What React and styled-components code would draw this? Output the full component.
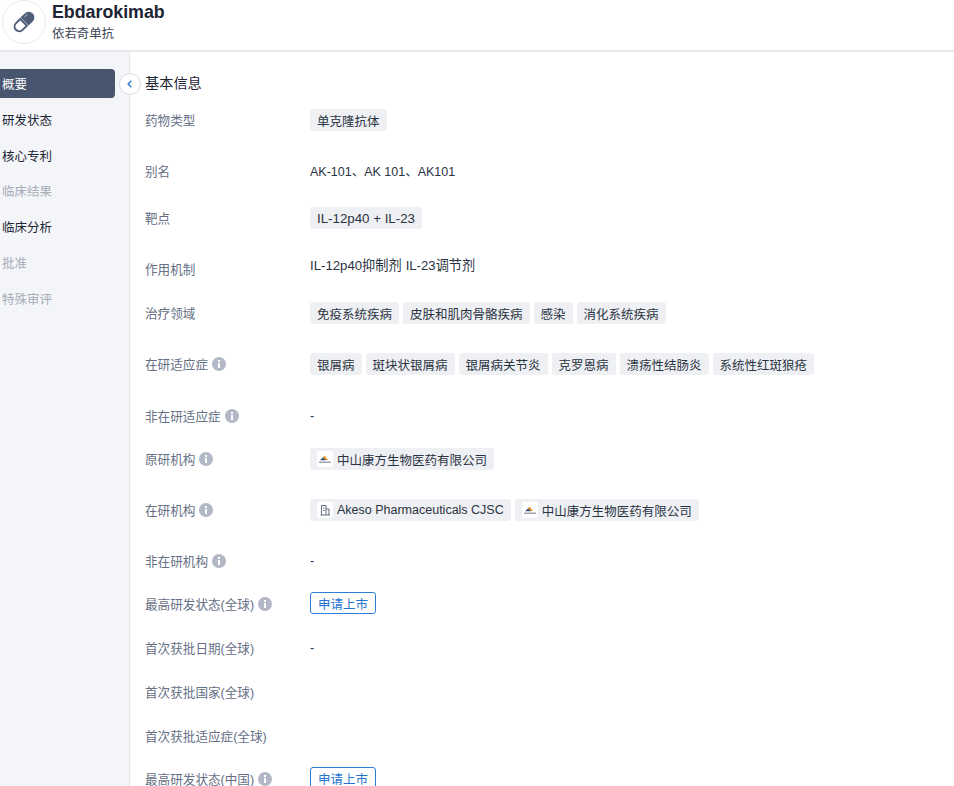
import React from 'react';
import styled, { createGlobalStyle } from 'styled-components';

const Global = createGlobalStyle`
  html, body { margin: 0; padding: 0; background: #fff; }
  body { font-family: "Liberation Sans", "Noto Sans CJK SC", sans-serif; }
`;

const Page = styled.div`
  width: 954px;
  height: 786px;
  overflow: hidden;
  display: flex;
  flex-direction: column;
  background: #fff;
`;

const Header = styled.header`
  height: 50px;
  flex: none;
  display: flex;
  align-items: center;
  gap: 6px;
  padding-left: 2px;
  border-bottom: 2px solid #e6e8eb;
  box-sizing: content-box;
`;

const Avatar = styled.div`
  width: 42px;
  height: 42px;
  margin-top: -6px;
  border: 1px solid #e8eaee;
  border-radius: 50%;
  display: flex;
  align-items: center;
  justify-content: center;
  background: #fff;
`;

const Titles = styled.div`
  display: flex;
  flex-direction: column;
  margin-top: -6px;
`;

const Title = styled.div`
  font-size: 17.8px;
  line-height: 24px;
  font-weight: 700;
  color: #1d2433;
`;

const Subtitle = styled.div`
  font-size: 12.4px;
  line-height: 20px;
  color: #3d4656;
`;

const Body = styled.div`
  flex: 1;
  display: flex;
  min-height: 0;
`;

const Sidebar = styled.nav`
  position: relative;
  width: 130px;
  flex: none;
  padding: 17px 14px 0 0;
  box-sizing: border-box;
  background: #f3f5f8;
  border-right: 1px solid #e6e8eb;
  display: flex;
  flex-direction: column;
  gap: 6.8px;
`;

const NavItem = styled.div`
  height: 29px;
  display: flex;
  align-items: center;
  padding-left: 2px;
  font-size: 12.5px;
  border-radius: ${p => (p.$active ? '0 4px 4px 0' : '0')};
  background: ${p => (p.$active ? '#48556f' : 'transparent')};
  color: ${p => (p.$active ? '#fff' : p.$muted ? '#a6adb9' : '#1d2433')};
`;

const Collapse = styled.button`
  position: absolute;
  top: 21px;
  right: -12px;
  width: 22px;
  height: 22px;
  padding: 0;
  border: 1px solid #d9dde3;
  border-radius: 50%;
  background: #fff;
  display: flex;
  align-items: center;
  justify-content: center;
`;

const Main = styled.main`
  flex: 1;
  padding: 20px 0 0 15px;
  min-width: 0;
`;

const SectionTitle = styled.h2`
  margin: 0 0 13px;
  font-size: 14.2px;
  line-height: 22px;
  font-weight: 400;
  color: #1d2433;
`;

const Row = styled.div`
  display: flex;
  align-items: center;
  height: 24px;
  margin-bottom: ${p => p.$gap}px;
`;

const Label = styled.div`
  width: 165px;
  flex: none;
  display: flex;
  align-items: center;
  gap: 4px;
  font-size: 12.6px;
  color: #667085;
  transform: translateY(${p => p.$shift || 0}px);
`;

const Value = styled.div`
  display: flex;
  align-items: center;
  gap: 4px;
  font-size: 12.5px;
  color: #2a3342;
`;

const Mechanism = styled.span`
  font-size: 13.2px;
  transform: translateY(-1px);
`;

const Dash = styled.span`
  transform: translateY(1px);
`;

const Tag = styled.span`
  display: inline-flex;
  align-items: center;
  gap: 4px;
  height: 22px;
  margin-top: 2px;
  padding: 0 7px;
  border-radius: 3px;
  background: #eef0f3;
  font-size: ${p => (p.$wide ? '13.3px' : '12.5px')};
  color: #2a3342;
  white-space: nowrap;
`;

const Status = styled.span`
  display: inline-flex;
  align-items: center;
  justify-content: center;
  width: 66px;
  height: 22px;
  box-sizing: border-box;
  border: 1px solid #2d7fd9;
  border-radius: 3px;
  color: #2474cf;
  font-size: 12.5px;
`;

const IconBox = styled.span`
  width: 16px;
  height: 16px;
  border-radius: 2px;
  background: #fff;
  display: inline-flex;
  align-items: center;
  justify-content: center;
`;

const InfoSvg = styled.svg`
  margin-top: 1px;
`;

const Pill = () => (
  <svg width="26" height="26" viewBox="0 0 32 32">
    <g transform="rotate(-44 16 16)">
      <path d="M15.4 10.2 H8 a5.8 5.8 0 0 0 0 11.6 H15.4 Z" fill="#fff" stroke="#4e5d78" strokeWidth="2.4" />
      <path d="M17 9 H24 a7 7 0 0 1 0 14 H17 Z" fill="#4e5d78" />
      <path d="M21 12 H25" stroke="#8a96ad" strokeWidth="1.6" strokeLinecap="round" />
    </g>
  </svg>
);

const Chevron = () => (
  <svg width="10" height="10" viewBox="0 0 10 10">
    <path d="M6.3 1.8 L3.2 5 L6.3 8.2" fill="none" stroke="#2d7fd9" strokeWidth="1.5" />
  </svg>
);

const Info = () => (
  <InfoSvg width="14" height="14" viewBox="0 0 14 14">
    <circle cx="7" cy="7" r="7" fill="#b2b8c5" />
    <rect x="6" y="3" width="2" height="2" fill="#fff" />
    <rect x="6" y="6" width="2" height="5" fill="#fff" />
  </InfoSvg>
);

const Logo = () => (
  <IconBox>
    <svg width="14" height="10" viewBox="0 0 14 10">
      <path d="M3 6 L6.5 1.5 L10 6 Z" fill="#e8932a" />
      <path d="M2 6.2 L5 3.5 L8 6.2 Z" fill="#35507d" />
      <rect x="1" y="7.6" width="12" height="1.2" fill="#8a8f98" />
    </svg>
  </IconBox>
);

const Building = () => (
  <IconBox>
    <svg width="12" height="12" viewBox="0 0 12 12" fill="none" stroke="#5f6b7d" strokeWidth="1">
      <path d="M2.5 11 V1.5 H7 V11 M7 5 H10 V11 M1.5 11 H11 M4 4 H5.5 M4 6.5 H5.5" />
    </svg>
  </IconBox>
);

const nav = [
  ['概要', 'active'],
  ['研发状态'],
  ['核心专利'],
  ['临床结果', 'muted'],
  ['临床分析'],
  ['批准', 'muted'],
  ['特殊审评', 'muted'],
];

const tags = list => list.map(t => <Tag key={t}>{t}</Tag>);

const company = (
  <Tag>
    <Logo />
    中山康方生物医药有限公司
  </Tag>
);

const rows = [
  { label: '药物类型', gap: 27, value: tags(['单克隆抗体']) },
  { label: '别名', gap: 23, value: 'AK-101、AK 101、AK101' },
  { label: '靶点', gap: 24, value: <Tag $wide>IL-12p40 + IL-23</Tag> },
  {
    label: '作用机制',
    gap: 23,
    shift: 3,
    value: (
      <>
        <Mechanism>IL-12p40抑制剂</Mechanism>
        <Mechanism>IL-23调节剂</Mechanism>
      </>
    ),
  },
  { label: '治疗领域', gap: 27, value: tags(['免疫系统疾病', '皮肤和肌肉骨骼疾病', '感染', '消化系统疾病']) },
  { label: '在研适应症', info: true, gap: 28, value: tags(['银屑病', '斑块状银屑病', '银屑病关节炎', '克罗恩病', '溃疡性结肠炎', '系统性红斑狼疮']) },
  { label: '非在研适应症', info: true, gap: 19, value: <Dash>-</Dash> },
  { label: '原研机构', info: true, gap: 27, value: company },
  {
    label: '在研机构',
    info: true,
    gap: 27,
    value: (
      <>
        <Tag>
          <Building />
          Akeso Pharmaceuticals CJSC
        </Tag>
        {company}
      </>
    ),
  },
  { label: '非在研机构', info: true, gap: 19, value: <Dash>-</Dash> },
  { label: '最高研发状态(全球)', info: true, gap: 20, value: <Status>申请上市</Status> },
  { label: '首次获批日期(全球)', gap: 20, value: <Dash>-</Dash> },
  { label: '首次获批国家(全球)', gap: 20, value: null },
  { label: '首次获批适应症(全球)', gap: 19, value: null },
  { label: '最高研发状态(中国)', info: true, gap: 19, value: <Status>申请上市</Status> },
];

export default function App() {
  return (
    <Page>
      <Global />
      <Header>
        <Avatar>
          <Pill />
        </Avatar>
        <Titles>
          <Title>Ebdarokimab</Title>
          <Subtitle>依若奇单抗</Subtitle>
        </Titles>
      </Header>
      <Body>
        <Sidebar>
          {nav.map(([text, state]) => (
            <NavItem key={text} $active={state === 'active'} $muted={state === 'muted'}>
              {text}
            </NavItem>
          ))}
          <Collapse aria-label="收起">
            <Chevron />
          </Collapse>
        </Sidebar>
        <Main>
          <SectionTitle>基本信息</SectionTitle>
          {rows.map(r => (
            <Row key={r.label} $gap={r.gap}>
              <Label $shift={r.shift}>
                {r.label}
                {r.info && <Info />}
              </Label>
              <Value>{r.value}</Value>
            </Row>
          ))}
        </Main>
      </Body>
    </Page>
  );
}
